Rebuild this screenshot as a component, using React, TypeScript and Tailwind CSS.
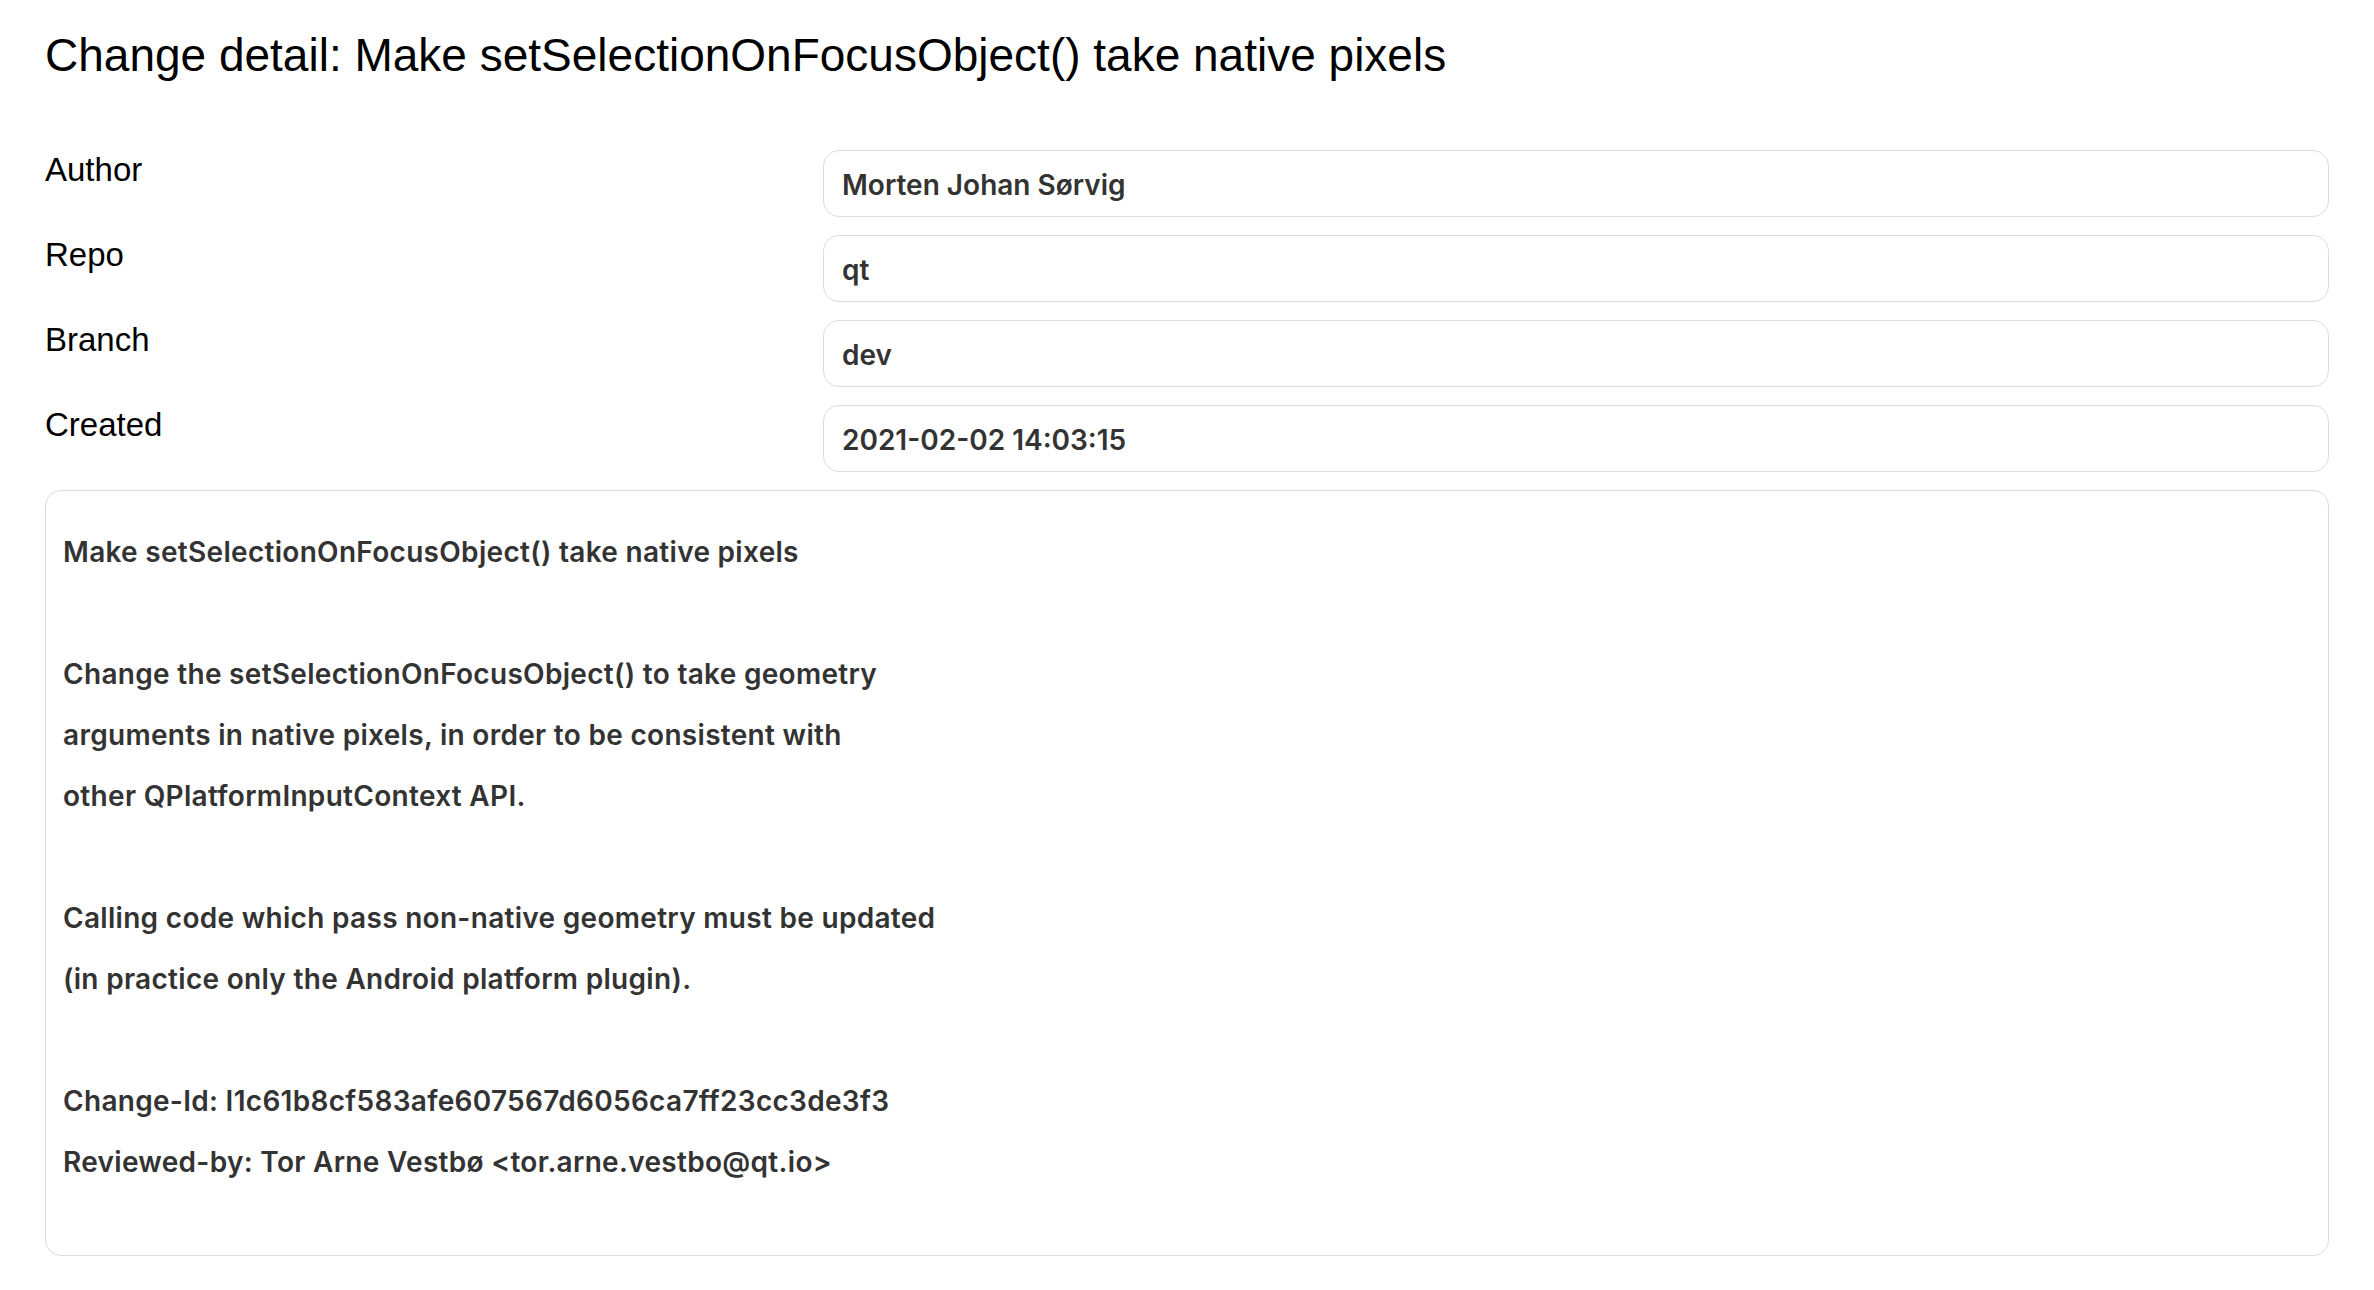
import React from "react";

const fields = [
  { label: "Author", value: "Morten Johan Sørvig" },
  { label: "Repo", value: "qt" },
  { label: "Branch", value: "dev" },
  { label: "Created", value: "2021-02-02 14:03:15" },
];

const message = [
  "Make setSelectionOnFocusObject() take native pixels",
  "",
  "Change the setSelectionOnFocusObject() to take geometry",
  "arguments in native pixels, in order to be consistent with",
  "other QPlatformInputContext API.",
  "",
  "Calling code which pass non-native geometry must be updated",
  "(in practice only the Android platform plugin).",
  "",
  "Change-Id: I1c61b8cf583afe607567d6056ca7ff23cc3de3f3",
  "Reviewed-by: Tor Arne Vestbø <tor.arne.vestbo@qt.io>",
];

export default function App() {
  return (
    <div className="min-h-screen bg-white px-[45px] pt-[29px] font-['Liberation_Sans',sans-serif] text-black">
      <h1 className="text-[46px] leading-[52px] font-normal">
        Change detail: Make setSelectionOnFocusObject() take native pixels
      </h1>

      <div className="mt-[69px] flex flex-col gap-[18px]">
        {fields.map((f) => (
          <div key={f.label} className="flex">
            <div className="w-[778px] shrink-0 text-[33px] leading-[40px]">
              {f.label}
            </div>
            <div className="flex h-[67px] flex-1 items-center rounded-[16px] border-[1.5px] border-[#dcdcdc] px-[18px] pt-[3px] font-['Inter',sans-serif] text-[28px] font-semibold text-[#333]">
              {f.value}
            </div>
          </div>
        ))}

        <div className="h-[766px] rounded-[16px] border-[1.5px] border-[#dcdcdc] px-[17px] pt-[31px] font-['Inter',sans-serif] text-[28px] font-semibold tracking-[0.3px] text-[#333]">
          {message.map((line, i) => (
            <div key={i} className="h-[61px] leading-[61px] whitespace-pre">
              {line}
            </div>
          ))}
        </div>
      </div>
    </div>
  );
}
